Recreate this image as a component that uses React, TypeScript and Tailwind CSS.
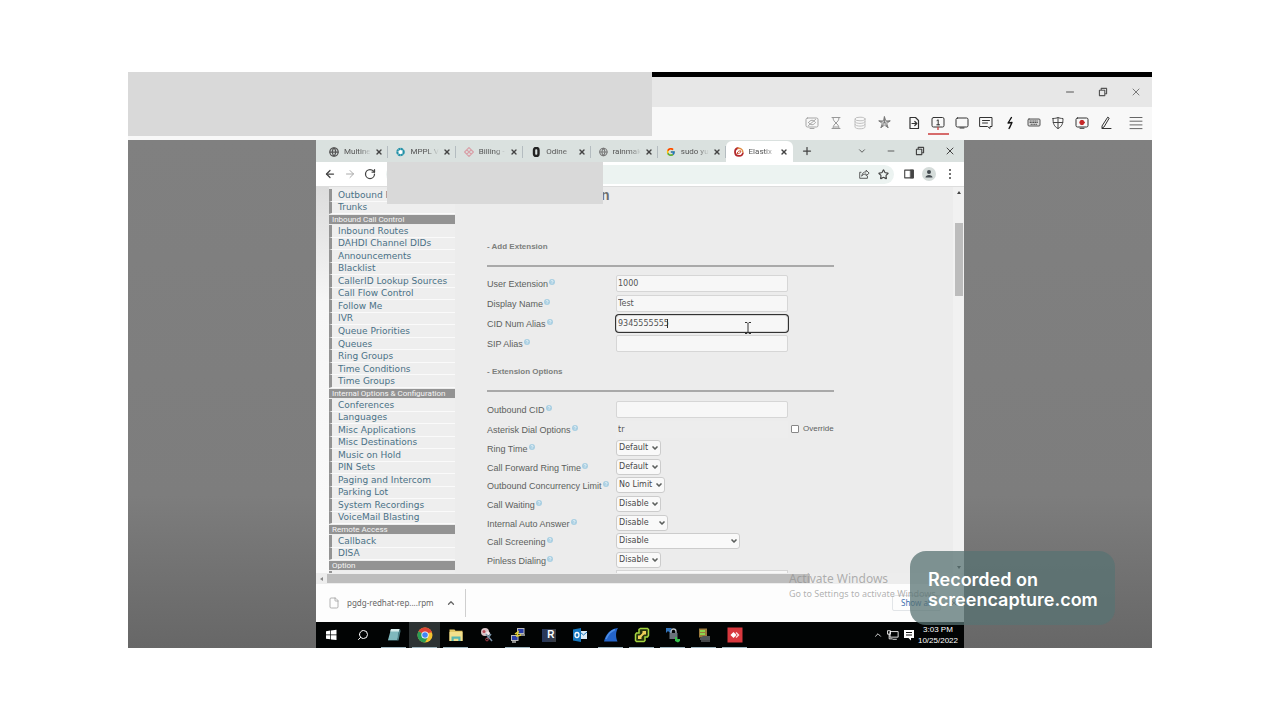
import type { ReactNode } from "react";
import {
  ArrowLeft,
  ArrowRight,
  ChevronDown,
  ChevronUp,
  File,
  Globe,
  Minus,
  Plus,
  RotateCw,
  Search,
  Star,
  X,
} from "lucide-react";
import { FcGoogle } from "react-icons/fc";

const Line = ({ children, className = "size-[14px]" }: { children: ReactNode; className?: string }) => (
  <svg
    viewBox="0 0 14 14"
    className={className}
    fill="none"
    stroke="currentColor"
    strokeWidth="1"
    strokeLinecap="round"
    strokeLinejoin="round"
  >
    {children}
  </svg>
);

const Restore = ({ className }: { className: string }) => (
  <Line className={className}>
    <path d="M2 4.5h7.5V12H2zM4.5 4.5V2H12v7.500H9.500" strokeWidth="1.6" />
  </Line>
);

const remoteTools = [
  {
    label: "Hide screen",
    tone: "text-[#a5a5a5]",
    icon: (
      <Line>
        <rect x="1" y="2" width="12" height="9" rx="1.500" />
        <path d="M5 12.500h4M3.500 9.500 10.500 3.500M3.500 6.500c2-3 5-3 7 0-2 3-5 3-7 0" />
      </Line>
    ),
  },
  {
    label: "Timer",
    tone: "text-[#999999]",
    icon: (
      <Line>
        <path d="M3 1.500h8M3 12.500h8M4 1.500c0 3 1.500 4 3 5.500 1.500-1.500 3-2.500 3-5.500M4 12.500c0-3 1.500-4 3-5.500 1.500 1.500 3 2.500 3 5.500M5 11h4" />
      </Line>
    ),
  },
  {
    label: "Storage",
    tone: "text-[#c0c0c0]",
    icon: (
      <Line>
        <ellipse cx="7" cy="3" rx="5" ry="1.800" />
        <path d="M2 3v8c0 2.400 10 2.400 10 0V3M2 5.700c0 2.400 10 2.400 10 0M2 8.400c0 2.400 10 2.400 10 0" />
      </Line>
    ),
  },
  {
    label: "Favourite",
    tone: "text-[#777777]",
    last: true,
    icon: (
      <Line className="size-[13px]">
        <path d="m7 1 1.500 4.300h4.500L9.400 8l1.400 4.500L7 9.800l-3.800 2.700L4.600 8 1 5.300h4.500zM7 1v6M13 5.300 7 7M10.800 12.500 7 7M3.200 12.500 7 7M1 5.300 7 7" />
      </Line>
    ),
  },
  {
    label: "File transfer",
    tone: "text-[#333333]",
    icon: (
      <Line>
        <path d="M3 1.500h5.500l3 3v8H3zM5 7.500h4.500M7.800 5.500l2 2-2 2" strokeWidth="1.200" />
      </Line>
    ),
  },
  {
    label: "Screen 1",
    tone: "text-[#333333]",
    active: true,
    icon: (
      <Line>
        <rect x="1" y="1.500" width="12" height="9.500" rx="1.500" />
        <path d="M6 4.500 7.200 3.800v5M5.800 8.800h2.800" />
        <path d="M7 11.500v2" stroke="#c44" strokeWidth="1.400" />
      </Line>
    ),
  },
  {
    label: "Screen 2",
    tone: "text-[#333333]",
    icon: (
      <Line>
        <rect x="1" y="2" width="12" height="9" rx="1.500" />
        <path d="M5 12h4" />
      </Line>
    ),
  },
  {
    label: "Chat",
    tone: "text-[#333333]",
    icon: (
      <Line>
        <path d="M1 1.500h12v9H11v2l-2.500-2H1zM3.500 4.500h7M3.500 7h5" />
      </Line>
    ),
  },
  {
    label: "Actions",
    tone: "text-[#111111]",
    icon: (
      <Line>
        <path d="M8.500 1.500 5 7l4-.500L6 12.500M8 2 5.500 6.500M9 6.500 6.500 12" strokeWidth="1.300" />
      </Line>
    ),
  },
  {
    label: "Keyboard",
    tone: "text-[#555555]",
    icon: (
      <Line>
        <rect x="1" y="3" width="12" height="7" rx="1" fill="#dddddd" />
        <path d="M3 5h8M3 6.500h8M4 8.300h6" strokeDasharray="0.600 1.100" />
      </Line>
    ),
  },
  {
    label: "Permissions",
    tone: "text-[#444444]",
    icon: (
      <Line>
        <path d="M2 2.500c2 0 4-.500 5-1 1 .500 3 1 5 1 0 5-1 8-5 10-4-2-5-5-5-10zM7 1.500v11M2.200 6.500h9.600" />
      </Line>
    ),
  },
  {
    label: "Record",
    tone: "text-[#333333]",
    icon: (
      <Line>
        <rect x="1" y="2" width="12" height="9" rx="1.500" />
        <path d="M5 12.300h4" />
        <circle cx="7" cy="6.500" r="2.200" fill="#c62828" stroke="#c62828" />
      </Line>
    ),
  },
  {
    label: "Whiteboard",
    tone: "text-[#333333]",
    icon: (
      <Line>
        <path d="M8.500 1.500 3 10v2l2-1 5-8.500zM3 12.500h9" />
      </Line>
    ),
  },
];

const tabs = [
  { title: "Multine", icon: <Globe className="size-[10px] text-[#555555]" strokeWidth={3} /> },
  {
    title: "MPPL V",
    icon: (
      <svg viewBox="0 0 10 10" className="size-[10px]">
        <circle cx="5" cy="5" r="3.500" fill="white" stroke="#2492a8" strokeWidth="2.400" strokeDasharray="2.400 0.350" />
      </svg>
    ),
  },
  {
    title: "Billing -",
    icon: (
      <svg viewBox="0 0 10 10" className="size-[10px]" fill="none" stroke="#d9a0a8" strokeWidth="1.200">
        <path d="M5 .600 9.400 5 5 9.400.600 5zM2.800 2.800l4.400 4.400M7.200 2.800 2.800 7.200" />
      </svg>
    ),
  },
  {
    title: "Odine",
    icon: (
      <svg viewBox="0 0 10 10" className="size-[10px]">
        <rect x="3" y="1" width="4.500" height="8" rx="2" fill="none" stroke="#222222" strokeWidth="2.400" />
      </svg>
    ),
  },
  { title: "rainmak", icon: <Globe className="size-[10px] text-[#777777]" strokeWidth={3} /> },
  { title: "sudo yu", icon: <FcGoogle className="size-[10px]" /> },
  {
    title: "Elastix",
    active: true,
    icon: (
      <svg viewBox="0 0 10 10" className="size-[10px]" fill="none" strokeWidth="1.800">
        <path d="M4.500 1a4 4 0 1 0 4.500 4.500" stroke="#b3282d" />
        <path d="M3.500 1.500C6 .500 9.200 2.500 8.800 5.500" stroke="#e08a3f" strokeWidth="1.400" />
        <path d="M3 6.500c1-2.500 2.500-3 4-2.500-.500 2-2 3-4 2.500z" stroke="#c8502f" strokeWidth="1" />
      </svg>
    ),
  },
];

const menu = [
  {
    title: "Inbound Call Control",
    height: "h-[163px]",
    items: [
      "Inbound Routes",
      "DAHDI Channel DIDs",
      "Announcements",
      "Blacklist",
      "CallerID Lookup Sources",
      "Call Flow Control",
      "Follow Me",
      "IVR",
      "Queue Priorities",
      "Queues",
      "Ring Groups",
      "Time Conditions",
      "Time Groups",
    ],
  },
  {
    title: "Internal Options & Configuration",
    height: "h-[125px]",
    items: [
      "Conferences",
      "Languages",
      "Misc Applications",
      "Misc Destinations",
      "Music on Hold",
      "PIN Sets",
      "Paging and Intercom",
      "Parking Lot",
      "System Recordings",
      "VoiceMail Blasting",
    ],
  },
  { title: "Remote Access", height: "h-[25px]", items: ["Callback", "DISA"] },
  { title: "Option", height: "h-[12px]", items: [""] },
];

const textFields = [
  { id: "extension", label: "User Extension", value: "1000" },
  { id: "name", label: "Display Name", value: "Test" },
  { id: "cid", label: "CID Num Alias", value: "9345555555", focused: true },
  { id: "sip", label: "SIP Alias", value: "" },
];

const selects = [
  { id: "ring", label: "Ring Time", value: "Default", width: "w-[45px]" },
  { id: "forward", label: "Call Forward Ring Time", value: "Default", width: "w-[45px]" },
  { id: "limit", label: "Outbound Concurrency Limit", value: "No Limit", width: "w-[49px]" },
  { id: "waiting", label: "Call Waiting", value: "Disable", width: "w-[45px]" },
  { id: "answer", label: "Internal Auto Answer", value: "Disable", width: "w-[52px]" },
  { id: "screening", label: "Call Screening", value: "Disable", width: "w-[124px]" },
  { id: "pinless", label: "Pinless Dialing", value: "Disable", width: "w-[45px]" },
];

const AppIcon = ({ children }: { children: ReactNode }) => (
  <svg viewBox="0 0 16 16" className="size-4">
    {children}
  </svg>
);

const taskbar = [
  {
    name: "Start",
    icon: (
      <AppIcon>
        <path d="M2 4.200 6.300 3.600v4H2zM7 3.500l5.500-.700v4.800H7zM2 8.300h4.300v4L2 11.700zM7 8.300h5.500v4.800L7 12.400z" fill="white" />
      </AppIcon>
    ),
  },
  { name: "Search", icon: <Search className="size-3 -scale-x-100 text-white" /> },
  {
    name: "Notepad",
    open: true,
    icon: (
      <AppIcon>
        <path d="M5 2h8.500l-2 11H2z" fill="#7fb8bd" />
        <path d="M5 2h8.500l-.500 2.500H4.200z" fill="#d7ecec" />
        <path d="m12 7 2-5 .500 2-2 9.500L2 13.500V13h9.500z" fill="#4d8088" />
      </AppIcon>
    ),
  },
  {
    name: "Chrome",
    open: true,
    active: true,
    icon: (
      <AppIcon>
        <circle cx="8" cy="8" r="7.500" fill="#f2c230" />
        <path d="M8 8 1.500 4.250A7.500 7.500 0 0 1 14.500 4.250z" fill="#dc4437" />
        <path d="M1.500 4.250A7.500 7.500 0 0 0 8 15.500L11.200 9.800 8 8z" fill="#2a9d55" />
        <path d="M8 4.250h6.500a7.500 7.500 0 0 1 .600 1.200H8z" fill="#dc4437" />
        <circle cx="8" cy="8" r="3.600" fill="white" />
        <circle cx="8" cy="8" r="2.800" fill="#4285f4" />
      </AppIcon>
    ),
  },
  {
    name: "Files",
    open: true,
    icon: (
      <AppIcon>
        <path d="M1.500 2.500h5l1 1.200h7V14h-13z" fill="#e3c765" />
        <path d="M1.500 5h13v9h-13z" fill="#f3e08c" />
        <path d="M3.500 9.500h9V14h-2.200v-2.200H5.700V14H3.500z" fill="#58b6b0" />
      </AppIcon>
    ),
  },
  {
    name: "Snipping Tool",
    icon: (
      <AppIcon>
        <circle cx="6" cy="5" r="4" fill="#d8c3c6" />
        <circle cx="5" cy="4.500" r="1.500" fill="#b84a55" />
        <circle cx="9" cy="6.500" r="2" fill="#efe6e7" />
        <path d="m7 7 6 7M12 7l-4 5" stroke="#7b93a8" strokeWidth="1.500" />
        <circle cx="8" cy="12.500" r="1.400" fill="none" stroke="#a03844" />
      </AppIcon>
    ),
  },
  {
    name: "PuTTY",
    open: true,
    icon: (
      <AppIcon>
        <rect x="7.500" y="1.500" width="6.500" height="5" fill="#2b3fa8" stroke="#b9b9b9" />
        <rect x="1.500" y="8.500" width="6.500" height="5" fill="#2b3fa8" stroke="#b9b9b9" />
        <path d="M6 15h-4M10 8h5" stroke="#b9b9b9" strokeWidth="1.500" />
        <path d="m5 7 3-2-1 4 4-1" stroke="#e5d334" strokeWidth="1.500" fill="none" />
      </AppIcon>
    ),
  },
  {
    name: "Royal",
    icon: (
      <span className="flex h-[13px] w-[14px] items-center justify-end bg-gradient-to-r from-[#26375e] to-[#3a3d43] pr-px font-['Liberation_Sans'] text-[10px] leading-none font-bold text-white">
        R
      </span>
    ),
  },
  {
    name: "Outlook",
    icon: (
      <AppIcon>
        <path d="M8 4h7v8H8z" fill="#dcecf7" />
        <path d="m8 5 3.500 3L15 5" stroke="#1b75bb" fill="none" />
        <path d="M1 2.500 9 1v14l-8-1.500z" fill="#1577bf" />
        <ellipse cx="5" cy="8" rx="2" ry="2.500" stroke="white" strokeWidth="1.300" fill="none" />
      </AppIcon>
    ),
  },
  {
    name: "Wireshark",
    open: true,
    icon: (
      <AppIcon>
        <path d="M1 14.500C3 7 7 2 15 1c-2.500 4-2.500 9-.500 13.500z" fill="#2464c9" />
        <path d="M3 12C5 7 8 4 12 2.500" stroke="#4e90e8" strokeWidth="1.500" fill="none" />
      </AppIcon>
    ),
  },
  {
    name: "Connector",
    open: true,
    icon: (
      <AppIcon>
        <path
          d="M6.500 1.500h7l1 1v6l-1 1.500H11v3.500l-1 1H2.500l-1-1v-6l1-1.500H5V2.500z"
          fill="#26330f"
          stroke="#a4d53e"
          strokeWidth="1.500"
        />
        <path d="m5.500 10.500 5-5" stroke="#f0cf5a" strokeWidth="2" />
        <path d="M4 8.500h3.500V12H4zM8.500 4H12v3.500H8.500z" fill="#f0cf5a" />
      </AppIcon>
    ),
  },
  {
    name: "WinSCP",
    open: true,
    icon: (
      <AppIcon>
        <path d="M1 1h6L5.500 3 7 5 5 6 3 4 1 6z" fill="#3272b8" />
        <path d="M6 6V4.500a2.500 2.500 0 0 1 5 0V6" stroke="#b8bfc5" strokeWidth="1.300" fill="none" />
        <path d="M4.500 6h8v6h-8z" fill="#69727a" />
        <path d="M10 10h2v2h3v2l-2 1.500-3-1.500z" fill="#35c14b" />
      </AppIcon>
    ),
  },
  {
    name: "Server",
    open: true,
    icon: (
      <AppIcon>
        <path d="M3 1.500h8v9H3z" fill="#9b7a3c" />
        <path d="M4 3h5v2H4zM4 6h5v2H4z" fill="#8bd44f" />
        <path d="M4 11l3-2h7v4H4z" fill="#50565a" />
        <path d="M5 14h9" stroke="#85898b" />
      </AppIcon>
    ),
  },
  {
    name: "AnyDesk",
    open: true,
    icon: (
      <AppIcon>
        <path d="M.500.500h15v15H.500z" fill="#d8383e" />
        <path d="m6.500 5 3 3-3 3-3-3z" fill="white" />
        <path d="m9.500 5 3 3-3 3-1-1 2-2-2-2z" fill="#fbdada" />
      </AppIcon>
    ),
  },
];

const Help = () => (
  <svg viewBox="0 0 6 6" className="mb-1 ml-px size-[6px] shrink-0">
    <circle cx="3" cy="3" r="3" fill="#a9cfe2" />
    <path d="M2 2.200c.300-1 2-.800 2 .100 0 .700-1 .600-1 1.400M3 4.300v.600" stroke="white" strokeWidth="0.700" fill="none" />
  </svg>
);

const Row = ({ id, label, children }: { id: string; label: string; children: ReactNode }) => (
  <div className="flex h-5 items-center">
    <label htmlFor={id} className="flex w-[129px] items-center pt-[2px] text-[9px] leading-3 whitespace-nowrap">
      {label}
      <Help />
    </label>
    {children}
  </div>
);

const fieldStyle =
  "h-[17px] w-[172px] rounded-[2px] border border-[#d6d6d6] bg-[#f7f7f7] px-px font-['DejaVu_Sans',sans-serif] text-[8px] text-[#555555] outline-none";

const SectionTitle = ({ children }: { children: ReactNode }) => (
  <h2 className="border-b-2 border-[#a9a9a9] pt-3 pb-3 text-[8px] leading-3 font-bold text-[#7c7f7d]">{children}</h2>
);

const MenuItem = ({ children }: { children: ReactNode }) => (
  <li className="flex min-h-0 flex-1 items-center overflow-hidden border-b border-l-[3px] border-b-[#fafafa] border-l-[#939393] bg-[#eeeeee] pt-px pl-[6px]">
    <a href="#" className="text-[9px] leading-[11px] whitespace-nowrap">
      {children}
    </a>
  </li>
);

const RemoteHeader = () => (
  <header className="flex h-[68px] bg-[#f8f8f8]">
    <div className="mb-1 h-16 w-[524px] bg-[#d9d9d9]" />
    <div className="flex flex-1 flex-col">
      <div className="h-[5px] bg-black" />
      <div className="flex h-[30px] items-center justify-end gap-[22px] bg-[#e7e7e7] pr-[10px] text-[#555555]">
        <button aria-label="Minimize">
          <Minus className="size-3" />
        </button>
        <button aria-label="Restore">
          <Restore className="size-[10px]" />
        </button>
        <button aria-label="Close">
          <X className="size-3" strokeWidth={1.500} />
        </button>
      </div>
      <div className="flex flex-1 items-center justify-end pr-[9px] pb-[2px]">
        {remoteTools.map((tool) => (
          <button
            key={tool.label}
            aria-label={tool.label}
            className={`flex h-6 w-6 items-center justify-center ${tool.tone} ${tool.last ? "mr-[6px]" : ""} ${
              tool.active ? "relative after:absolute after:bottom-0 after:h-[2px] after:w-[21px] after:bg-[#d66b6b]" : ""
            }`}
          >
            {tool.icon}
          </button>
        ))}
        <button aria-label="Menu" className="ml-[11px] text-[#666666]">
          <Line>
            <path d="M1 1.500h12M1 5.200h12M1 8.900h12M1 12.600h12" />
          </Line>
        </button>
      </div>
    </div>
  </header>
);

const TabStrip = () => (
  <div className="flex h-[22px] items-center bg-[#dae1df] pl-[5px] text-[#444444]">
    <div className="flex h-full w-[472px] pt-px">
      {tabs.map((tab) => (
        <div
          key={tab.title}
          className={`flex min-w-0 flex-1 items-center pr-[5px] pl-2 ${tab.active ? "rounded-t-md bg-white" : ""}`}
        >
          {tab.icon}
          <span className="ml-[5px] flex-1 mask-r-from-60% font-['Roboto',sans-serif] text-[8px] leading-3 whitespace-nowrap text-[#555555]">
            {tab.title}
          </span>
          <button aria-label={`Close ${tab.title}`} className="ml-1">
            <X className="size-2" strokeWidth={4} />
          </button>
          {!tab.active && <i className="-mr-[5px] ml-1 h-3 w-px bg-[#b4bcc0]" />}
        </div>
      ))}
    </div>
    <button aria-label="New tab" className="ml-2">
      <Plus className="size-3" strokeWidth={2.500} />
    </button>
    <div className="mr-2 ml-auto flex items-center gap-[19px]">
      <button aria-label="Search tabs">
        <ChevronDown className="size-[10px]" />
      </button>
      <button aria-label="Minimize">
        <Minus className="size-[10px]" />
      </button>
      <button aria-label="Restore">
        <Restore className="size-[10px]" />
      </button>
      <button aria-label="Close">
        <X className="size-[12px]" strokeWidth={2} />
      </button>
    </div>
  </div>
);

const AddressBar = () => (
  <div className="flex h-[25px] items-center border-b border-[#dddddd] bg-white pr-2 pl-2 text-[#444444]">
    <button aria-label="Back">
      <ArrowLeft className="size-3" strokeWidth={2.500} />
    </button>
    <button aria-label="Forward" className="ml-2 text-[#aaaaaa]">
      <ArrowRight className="size-3" />
    </button>
    <button aria-label="Reload" className="ml-2">
      <RotateCw className="size-3" strokeWidth={2.500} />
    </button>
    <div className="ml-[10px] flex h-[19px] flex-1 items-center justify-end gap-2 rounded-full bg-[#ecf3f1] pr-[5px]">
      <button aria-label="Share">
        <Line className="size-3">
          <path d="M3.500 5H2v7h9V9.500M4.500 9c.500-3 2-4.500 5-4.500V2.500L13 6 9.500 9V7c-2 0-3.500.500-5 2z" />
        </Line>
      </button>
      <button aria-label="Bookmark">
        <Star className="size-[11px]" strokeWidth={2.500} />
      </button>
    </div>
    <button aria-label="Side panel" className="ml-[9px]">
      <Line className="size-3">
        <path d="M2 2.500h10v9H2z" strokeWidth="1.300" />
        <path d="M9 2.500h3v9H9z" fill="currentColor" />
      </Line>
    </button>
    <button aria-label="Profile" className="ml-[7px] rounded-full bg-[#d5dcda]">
      <svg viewBox="0 0 14 14" className="size-[14px]" fill="#444b50">
        <circle cx="7" cy="5" r="2" />
        <path d="M3.500 10.500c0-3.500 7-3.500 7 0z" />
      </svg>
    </button>
    <button aria-label="More" className="ml-2">
      <svg viewBox="0 0 12 12" className="size-3" fill="currentColor">
        <circle cx="6" cy="2" r="1" />
        <circle cx="6" cy="6" r="1" />
        <circle cx="6" cy="10" r="1" />
      </svg>
    </button>
  </div>
);

const ExtensionForm = () => (
  <form className="relative w-[347px] font-['Liberation_Sans',sans-serif] text-[#5c5f5d]">
    <h1 className="h-[42px] pl-[114px] text-[14px] leading-[17px] font-bold text-[#6f6f6f]">n</h1>
    <SectionTitle>- Add Extension</SectionTitle>
    <div className="pt-[6px]">
      {textFields.map((field) => (
        <Row key={field.id} id={field.id} label={field.label}>
          <span className="relative">
            <input
              id={field.id}
              defaultValue={field.value}
              className={`block ${fieldStyle} ${field.focused ? "rounded-[3px] ring-1 ring-[#333333]" : ""}`}
            />
            {field.focused && <i className="absolute top-1 left-[51px] h-[9px] w-px bg-[#333333]" />}
          </span>
        </Row>
      ))}
    </div>
    <div className="h-px" />
    <SectionTitle>- Extension Options</SectionTitle>
    <div className="pt-[7px]">
      <Row id="outbound" label="Outbound CID">
        <input id="outbound" className={fieldStyle} />
      </Row>
      <Row id="dial" label="Asterisk Dial Options">
        <input
          id="dial"
          defaultValue="tr"
          className="h-[17px] w-[172px] bg-[#ededed] px-[2px] font-['DejaVu_Sans',sans-serif] text-[8px] text-[#555555]"
        />
        <input
          id="override"
          type="checkbox"
          className="ml-[3px] size-2 appearance-none rounded-[1px] border border-[#888888] bg-white"
        />
        <label htmlFor="override" className="ml-1 text-[8px] leading-3">
          Override
        </label>
      </Row>
      <div className="flex h-[130px] flex-col justify-between">
        {selects.map((item) => (
          <div key={item.id} className="-my-px">
            <Row id={item.id} label={item.label}>
              <span className="relative flex items-center">
                <select
                  id={item.id}
                  className={`h-4 appearance-none rounded-[3px] border border-[#cccccc] bg-[#f9f9f9] pl-[2px] font-['DejaVu_Sans',sans-serif] text-[8px] text-[#4a4a4a] ${item.width}`}
                >
                  <option>{item.value}</option>
                </select>
                <ChevronDown className="pointer-events-none absolute right-[2px] size-2" strokeWidth={5} />
              </span>
            </Row>
          </div>
        ))}
      </div>
      <div className="mt-px ml-[129px] h-4 w-[172px] border border-[#d6d6d6] bg-[#f7f7f7]" />
    </div>
    {/* text cursor */}
    <svg viewBox="0 0 8 12" className="absolute top-[135px] left-[257px] h-3 w-2" fill="none" stroke="#333333">
      <path d="M1 .500h2L4 1.500 5 .500h2M4 1.500v9M1 11.500h2l1-1 1 1h2" />
    </svg>
  </form>
);

const Page = () => (
  <main className="flex h-[386px] overflow-hidden bg-[#ececec]">
    <div className="w-[13px] shrink-0 bg-gradient-to-b from-[#dcdcdc] via-[#f6f6f6] via-30% to-[#fafafa]" />
    <nav className="w-[126px] shrink-0 pt-[2px] font-['DejaVu_Sans',sans-serif] text-[#4a7186]">
      <ul className="flex h-[25px] flex-col">
        <MenuItem>Outbound Routes</MenuItem>
        <MenuItem>Trunks</MenuItem>
      </ul>
      {menu.map((section) => (
        <section key={section.title}>
          <h3 className="my-px h-[9px] bg-[#939393] pl-[3px] font-['Roboto',sans-serif] text-[8px] leading-[9px] text-[#f5f5f5]">
            {section.title}
          </h3>
          <ul className={`flex flex-col ${section.height}`}>
            {section.items.map((item) => (
              <MenuItem key={item}>{item}</MenuItem>
            ))}
          </ul>
        </section>
      ))}
    </nav>
    <div className="flex-1 pl-8">
      <ExtensionForm />
    </div>
    <div className="flex w-[11px] flex-col items-center bg-[#f1f1f1] pt-1 pb-1 text-[#444444]">
      <svg viewBox="0 0 4 3" className="h-[3px] w-1" fill="currentColor">
        <path d="M0 3 2 0l2 3z" />
      </svg>
      <div className="mt-[29px] h-[73px] w-2 bg-[#bcbcbc]" />
      <svg viewBox="0 0 4 3" className="mt-auto h-[3px] w-1" fill="currentColor">
        <path d="m0 0 2 3 2-3z" />
      </svg>
    </div>
  </main>
);

const Downloads = () => (
  <div className="flex h-[38px] items-center bg-[#fdfdfd] pl-3 text-[#666666]">
    <File className="size-3 text-[#999999]" strokeWidth={1.500} />
    <a href="#" className="ml-[7px] font-['Noto_Sans',sans-serif] text-[8px] leading-3">
      pgdg-redhat-rep....rpm
    </a>
    <button aria-label="Download options" className="ml-3">
      <ChevronUp className="size-[10px]" strokeWidth={3} />
    </button>
    <div className="ml-[9px] h-7 w-px bg-[#cfcfcf]" />
    <button className="mr-[9px] ml-auto h-4 rounded-[2px] border border-[#e2e5e8] px-2 font-['Noto_Sans',sans-serif] text-[8px] leading-3 text-[#3c6fae]">
      Show all
    </button>
    <button aria-label="Close downloads" className="mr-[6px]">
      <X className="size-2" />
    </button>
  </div>
);

const Taskbar = () => (
  <footer className="flex h-[26px] items-center bg-[#020404] text-white">
    {taskbar.map((item) => (
      <button
        key={item.name}
        aria-label={item.name}
        className={`relative flex h-full w-[31px] items-center justify-center ${item.active ? "bg-[#2c3233]" : ""} ${
          item.open ? "after:absolute after:bottom-0 after:h-px after:w-[25px] after:bg-[#9fb6c0]" : ""
        }`}
      >
        {item.icon}
      </button>
    ))}
    <div className="mr-[6px] ml-auto flex items-center">
      <ChevronUp className="size-[10px]" />
      <Line className="ml-1 size-3">
        <path d="M4 3h9v6.500H4zM1 2h3v4H1zM2.500 6v5.500H6M7 12h4" />
      </Line>
      <svg viewBox="0 0 12 12" className="ml-1 size-3">
        <path d="M1 1h10v8H8v2.500L5.500 9H1z" fill="white" />
        <path d="M3 3.500h6M3 6h6" stroke="#111111" />
      </svg>
      <time className="ml-[3px] text-center font-['Liberation_Sans',sans-serif] text-[8px] leading-[11px]">
        3:03 PM
        <br />
        10/25/2022
      </time>
    </div>
  </footer>
);

export default function App() {
  return (
    <div className="min-h-screen bg-white py-[72px]">
      <div className="mx-auto w-4/5">
        <RemoteHeader />
        <div className="relative bg-gradient-to-b from-[#808080] via-[#7d7d7d] via-70% to-[#676767] px-[188px]">
          <div className="relative">
            <TabStrip />
            <AddressBar />
            <Page />
            <div className="flex h-[11px] items-center bg-[#ededed] pl-1">
              <svg viewBox="0 0 3 4" className="h-1 w-[3px]" fill="#888888">
                <path d="M3 0 0 2l3 2z" />
              </svg>
              <div className="ml-1 h-[9px] w-3/4 bg-[#bdbdbd]" />
            </div>
            <Downloads />
            <Taskbar />
            <div className="absolute top-[22px] left-[71px] h-[42px] w-[216px] bg-[#d9d9d9]" />
            <div className="absolute right-[26px] bottom-[47px] font-['Noto_Sans',sans-serif] whitespace-nowrap text-[#909090]/70">
              <p className="text-[12px] leading-4">Activate Windows</p>
              <p className="text-[9px] leading-[14px]">Go to Settings to activate Windows.</p>
            </div>
          </div>
          <div className="absolute right-[37px] bottom-[23px] flex h-[74px] w-[205px] items-center rounded-2xl bg-[#587373]/75 pt-1 pl-[18px] font-['Inter',sans-serif] text-[18px] leading-5 font-semibold text-white">
            <p>
              Recorded on
              <br />
              screencapture.com
            </p>
          </div>
        </div>
      </div>
    </div>
  );
}
